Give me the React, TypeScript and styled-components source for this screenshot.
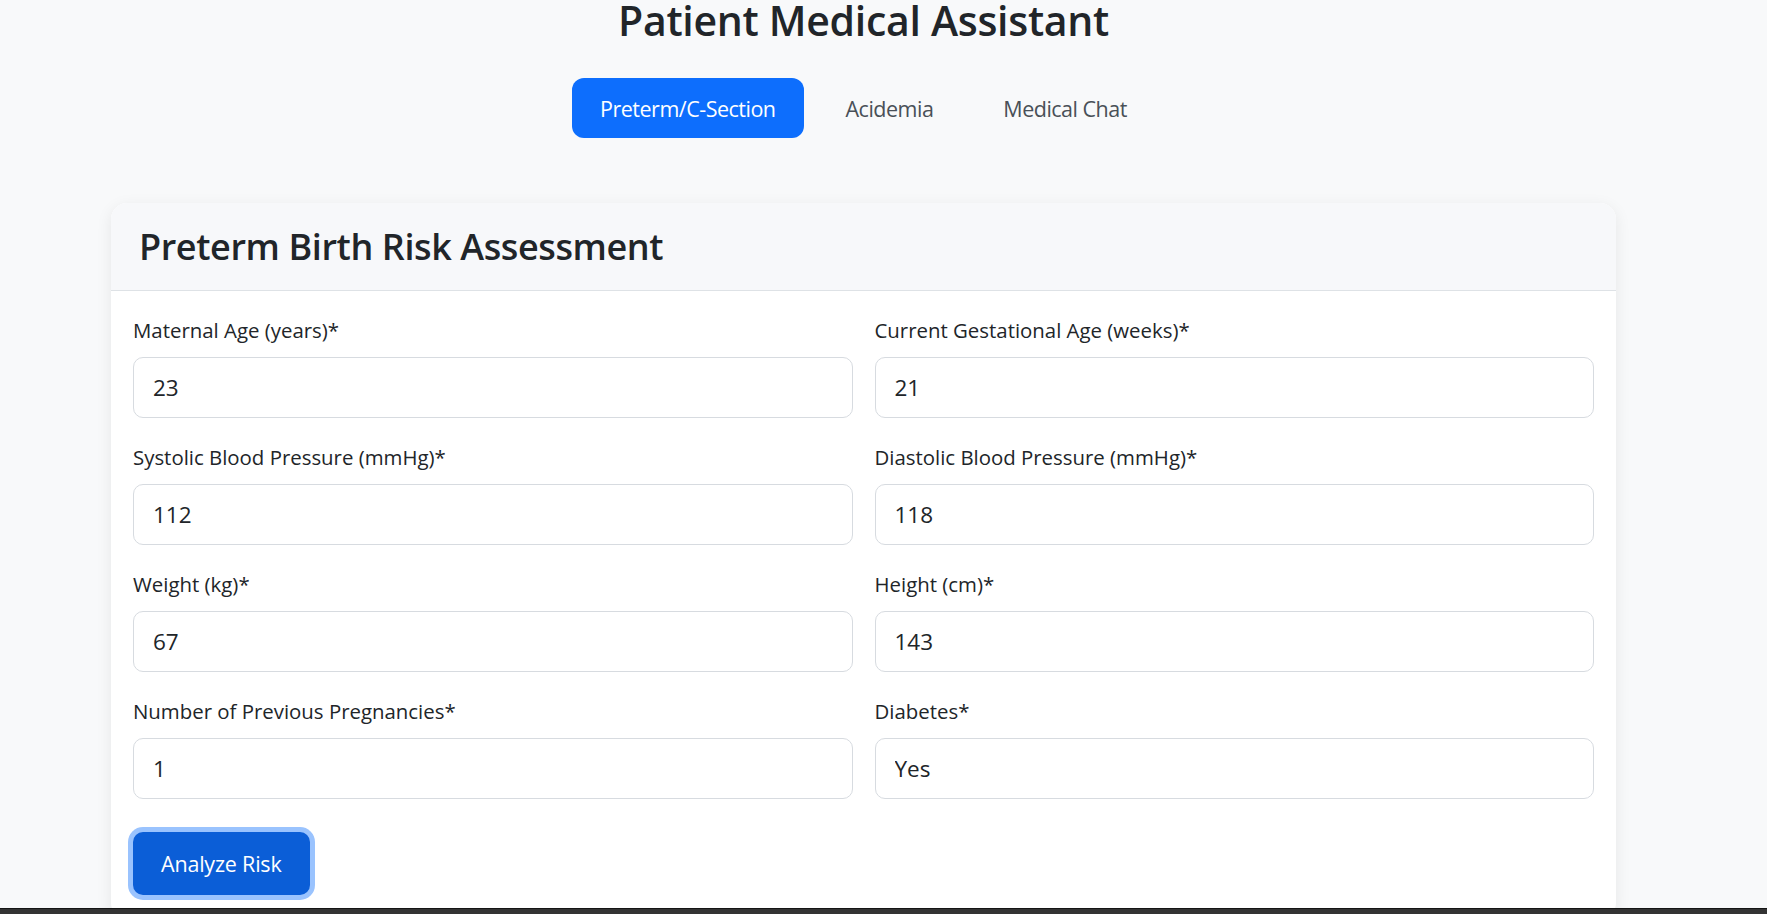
import React from 'react'
import styled, { createGlobalStyle } from 'styled-components'

const GlobalStyle = createGlobalStyle`
  html, body {
    margin: 0;
    padding: 0;
    background: #f8f9fa;
    overflow: hidden;
    font-family: 'Open Sans', 'Noto Sans', Arial, sans-serif;
    color: #212529;
  }
  * {
    box-sizing: border-box;
  }
`

const Page = styled.div`
  padding: 0 151px 0 111px;
`

const Header = styled.header`
  display: flex;
  flex-direction: column;
  align-items: center;
`

const Title = styled.h1`
  margin: 0;
  font-size: 41px;
  line-height: 40px;
  font-weight: 600;
  letter-spacing: -0.3px;
  color: #212529;
`

const Nav = styled.nav`
  display: flex;
  gap: 14px;
  margin-top: 38px;
`

const Tab = styled.button<{ $active?: boolean }>`
  height: 60px;
  padding: 0 28px;
  border: 0;
  border-radius: 12px;
  font-family: inherit;
  font-size: 21.5px;
  letter-spacing: -0.5px;
  background: ${(p) => (p.$active ? '#0d6efd' : 'transparent')};
  color: ${(p) => (p.$active ? '#fff' : '#495057')};
  cursor: pointer;
`

const Card = styled.section`
  margin-top: 65px;
  background: #fff;
  border-radius: 16px;
  box-shadow: 0 4px 16px rgba(0, 0, 0, 0.08);
  overflow: hidden;
`

const CardHeader = styled.div`
  background: #f7f8fa;
  border-bottom: 1px solid #dee2e6;
  padding: 20px 28px 19px;
`

const CardTitle = styled.h2`
  margin: 0;
  font-size: 36px;
  line-height: 48px;
  font-weight: 600;
  letter-spacing: -0.4px;
`

const CardBody = styled.form`
  padding: 24px 22px 24px 22px;
`

const FieldGrid = styled.div`
  display: grid;
  grid-template-columns: 1fr 1fr;
  column-gap: 22px;
  row-gap: 24px;
`

const Field = styled.div`
  display: flex;
  flex-direction: column;
`

const Label = styled.label`
  font-size: 20.4px;
  line-height: 30px;
  margin-bottom: 12px;
  color: #212529;
`

const Input = styled.input`
  height: 61px;
  padding: 0 19px;
  border: 1px solid #d7dbe0;
  border-radius: 10px;
  font-family: inherit;
  font-size: 22.5px;
  color: #212529;
  background: #fff;
  outline: none;
`

const SubmitButton = styled.button`
  margin-top: 33px;
  height: 63px;
  padding: 0 28px;
  border: 0;
  border-radius: 10px;
  background: #0b5ed7;
  color: #fff;
  font-family: inherit;
  font-size: 21.5px;
  letter-spacing: -0.2px;
  box-shadow: 0 0 0 5px #9ac3fe;
  cursor: pointer;
`

const BottomEdge = styled.div`
  position: fixed;
  left: 0;
  right: 0;
  bottom: 0;
  height: 6px;
  background: #333;
  border-top: 1px solid #151515;
`

const fields = [
  { label: 'Maternal Age (years)*', value: '23' },
  { label: 'Current Gestational Age (weeks)*', value: '21' },
  { label: 'Systolic Blood Pressure (mmHg)*', value: '112' },
  { label: 'Diastolic Blood Pressure (mmHg)*', value: '118' },
  { label: 'Weight (kg)*', value: '67' },
  { label: 'Height (cm)*', value: '143' },
  { label: 'Number of Previous Pregnancies*', value: '1' },
  { label: 'Diabetes*', value: 'Yes' },
]

export default function App() {
  return (
    <Page>
      <GlobalStyle />
      <Header>
        <Title>Patient Medical Assistant</Title>
        <Nav>
          <Tab $active>Preterm/C-Section</Tab>
          <Tab>Acidemia</Tab>
          <Tab>Medical Chat</Tab>
        </Nav>
      </Header>
      <Card>
        <CardHeader>
          <CardTitle>Preterm Birth Risk Assessment</CardTitle>
        </CardHeader>
        <CardBody onSubmit={(e) => e.preventDefault()}>
          <FieldGrid>
            {fields.map((f) => (
              <Field key={f.label}>
                <Label>{f.label}</Label>
                <Input defaultValue={f.value} />
              </Field>
            ))}
          </FieldGrid>
          <SubmitButton type="submit">Analyze Risk</SubmitButton>
        </CardBody>
      </Card>
      <BottomEdge />
    </Page>
  )
}
